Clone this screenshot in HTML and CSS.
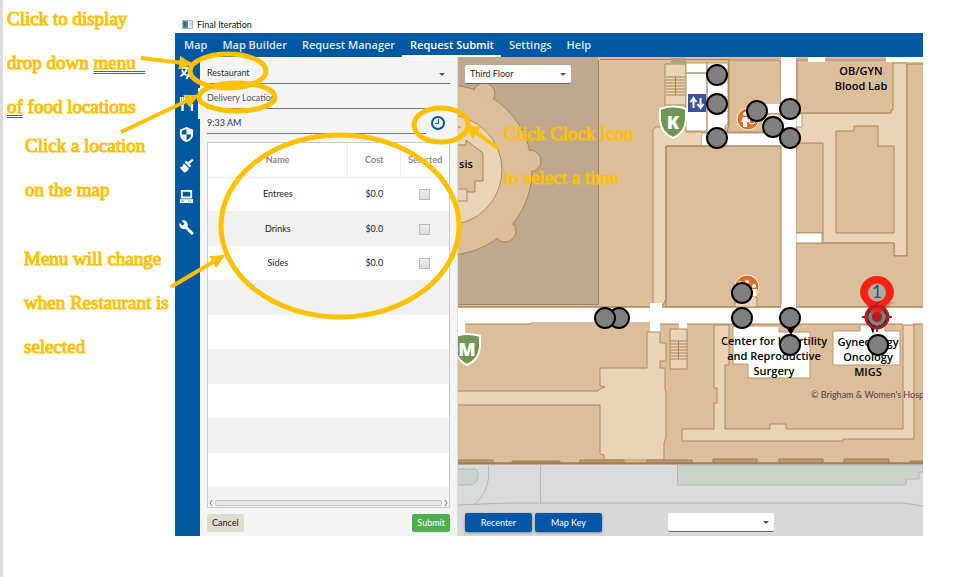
FILE: index.html
```html
<!DOCTYPE html>
<html lang="en">
<head>
<meta charset="utf-8">
<title>Final Iteration</title>
<link rel="stylesheet" href="styles.css">
</head>
<body>
<main class="sheet">
  <section class="app">
    <header class="titlebar">
      <svg class="app-icon" viewBox="0 0 11 9" aria-hidden="true"><rect x=".5" y=".5" width="10" height="8" fill="#e9edf0" stroke="#a9b4bb"/><rect x="1" y="1" width="5" height="7" fill="#4f8f86"/><rect x="2" y="2" width="2" height="5" fill="#2f6f8d"/><path d="M7 3h3M7 5h3" stroke="#c5ccd1"/></svg>
      <span>Final Iteration</span>
    </header>
    <nav class="tabs">
      <a href="#map">Map</a>
      <a href="#builder">Map Builder</a>
      <a href="#manager">Request Manager</a>
      <a href="#submit" class="active">Request Submit</a>
      <a href="#settings">Settings</a>
      <a href="#help">Help</a>
    </nav>
    <div class="body">
      <aside class="rail">
        <button aria-label="Translate"><svg viewBox="0 0 16 16"><path d="M1 3h9M5.500 1v2M8.500 3C8 7 5 10 1.500 12M3 5c1 3 3 5 5 6" class="line"/><path d="M8 15l3.500-9L15 15M9.500 12h4" class="line"/></svg></button>
        <button aria-label="Food" class="active"><svg viewBox="0 0 16 16"><path d="M1 1h1.500v5H3V1h1.500v5H5V1h1.500v6L5 9v7H2.500V9L1 7zM9 1l6 8v7h-2.500v-6L9 9z"/></svg></button>
        <button aria-label="Security"><svg viewBox="0 0 16 16"><path d="M8 0l7 3v5c0 4-3 7-7 8-4-1-7-4-7-8V3z"/><path d="M8 2v6H3V4zM8 8h5c0 3-2 5-5 6z" fill="#0058a2"/></svg></button>
        <button aria-label="Sanitation"><svg viewBox="0 0 16 16"><path d="M14 1l1.500 1.500-4 4 1.500 2-1.500 1.500L6 4.500 7.500 3l2 1.500zM5 5.500L10.500 11c-1 3-3 4.500-5 4.500l-5-5.500c2 0 4-1.500 4.500-4.500z"/></svg></button>
        <button aria-label="Computer"><svg viewBox="0 0 16 16"><path d="M2 1h12v9H2zM4 3v5h8V3zM1 11h14v4H1z" fill-rule="evenodd"/><path d="M3 13h2M10 13h1M12 13h1" stroke="#0058a2"/></svg></button>
        <button aria-label="Maintenance"><svg viewBox="0 0 16 16"><path d="M15.500 13.500L9 7c.8-2 .3-4-1-5.200C6.500.3 4.500 0 2.700.9L5.700 4 4 6 .8 3C0 4.800.4 7 1.800 8.300c1.300 1.300 3.200 1.700 5 1l6.500 6.300c.3.300.7.300 1 0l1.200-1.200c.3-.3.300-.7 0-.9z"/></svg></button>
      </aside>
      <form class="panel">
        <select class="field" aria-label="Service"><option>Restaurant</option></select>
        <input class="field" type="text" aria-label="Delivery Location" placeholder="Delivery Location">
        <div class="time-row">
          <input class="field" type="text" aria-label="Time" value="9:33 AM">
          <button type="button" class="clock" aria-label="Select a time"><svg viewBox="0 0 16 16"><circle cx="8" cy="8" r="6" fill="none" stroke="#0058a2" stroke-width="2"/><path d="M8.500 4v4.500H5" fill="none" stroke="#0058a2" stroke-width="1"/></svg></button>
        </div>
        <div class="menu">
          <div class="menu-view">
            <table>
              <colgroup><col class="c-name"><col class="c-cost"><col class="c-sel"></colgroup>
              <thead><tr><th>Name</th><th>Cost</th><th>Selected</th></tr></thead>
              <tbody>
                <tr><td>Entrees</td><td>$0.0</td><td><input type="checkbox" aria-label="Entrees"></td></tr>
                <tr><td>Drinks</td><td>$0.0</td><td><input type="checkbox" aria-label="Drinks"></td></tr>
                <tr><td>Sides</td><td>$0.0</td><td><input type="checkbox" aria-label="Sides"></td></tr>
                <tr><td colspan="3"></td></tr><tr><td colspan="3"></td></tr><tr><td colspan="3"></td></tr>
                <tr><td colspan="3"></td></tr><tr><td colspan="3"></td></tr><tr><td colspan="3"></td></tr>
                <tr><td colspan="3"></td></tr>
              </tbody>
            </table>
          </div>
          <div class="scroll" aria-hidden="true">
            <svg viewBox="0 0 4 6"><path d="M3 0L1 3l2 3"/></svg><span class="thumb"></span><svg viewBox="0 0 4 6"><path d="M1 0l2 3-2 3"/></svg>
          </div>
        </div>
        <div class="actions">
          <button type="button" class="cancel">Cancel</button>
          <button type="button" class="submit">Submit</button>
        </div>
      </form>
      <section class="map">
        <svg class="plan" viewBox="458 57 465 479" preserveAspectRatio="xMinYMin slice" role="img" aria-label="Third floor plan">
          <rect x="458" y="57" width="465" height="479" fill="#dbdbda"/>
          <path d="M458 504l50-1h400l15 2v31H458z" fill="#d8d8d7"/>
          <rect class="tan" x="450" y="50" width="490" height="413"/>
          <rect x="458" y="57" width="140" height="247" fill="#bca98e"/>
          <path class="edge" d="M598.500 304V60M458 304.500h141M458 307h323"/>
          <!-- rotunda -->
          <g class="tan">
            <circle cx="484" cy="94" r="11"/><circle cx="530" cy="161" r="11"/><circle cx="505" cy="231" r="11"/>
            <circle cx="447" cy="170" r="85"/>
          </g>
          <g fill="#dcbe9b"><circle cx="484" cy="94" r="10"/><circle cx="530" cy="161" r="10"/><circle cx="505" cy="231" r="10"/><circle cx="447" cy="170" r="84"/></g>
          <circle class="lite" cx="447" cy="170" r="55"/>
          <path class="tan" d="M450 145h16v-5l17 13v28h-8v11h-25z"/>
          <path class="lite" d="M450 189h17v12h-17z"/>
          <path class="edge" d="M458 127h3"/>
          <!-- upper light passages -->
          <path class="lite" d="M653 305V130l3-3h9V64h21v68h17v14h-37v153l-3 6z"/>
          <path class="edge" d="M600 59.500h129V132M666 105h20"/>
          <path class="stairs" d="M666 77h20M666 80h20M666 83h20M666 86h20M666 89h20M666 92h20M666 95h20M675.500 77v18"/>
          <rect x="671" y="58" width="15" height="5" fill="#b39e84"/>
          <path class="white" d="M686 63h21v10h-21zM686 73h21v58h-21zM707 63h21v61l-3 2v7h56v13h-79v-13h5z"/>
          <path class="tan" d="M734 132h47v-19h-16v-8h16V62l-3-2h-49v64l-2 8z"/>
          <rect x="765" y="104" width="17" height="9" fill="#fff"/>
          <path class="lite" d="M797 113h94v-50h16v193h-13v-13h-71v-10h-26z"/>
          <path class="tan" d="M797 60h96v50h-2v3h-94zM796 143h27v90h-27zM836 131h18v-5h24v20h16v87h-58z"/>
          <path class="tan" d="M907 64h25v243H796v-64h98v13h13z"/>
          <path class="white" d="M796 233h26v10h-26zM796 114h6v13h-6z"/>
          <path d="M781 57h15v250h-15zM702 134h80v11h-80zM808 57h17v5h-17zM886 57h37v5h-37z" fill="#fff"/>
          <path class="edge" d="M666 146v161h115V146z"/>
          <!-- main corridor -->
          <path d="M458 307.500h465v16.500H458z" fill="#fff"/>
          <path class="edge" d="M458 324h73v-1h119M660 324h19M687 324h97M458 307h192M660 307h121M796 307h127M796 324h127"/>
          <path d="M650 303h12v6h-12zM650 320h10v14h-10zM679 322h8v7h-8zM458 322h7v12h-7zM903 322h10v5h-10zM781 304h15v6h-15z" fill="#fff"/>
          <!-- lower light passages -->
          <path class="lite" d="M450 391h148l2-2 5-2-5-1v-18h47v-36h13v11h6v18h-6v7h5v22l1 2v45l-2 6v17h-60v-5l-4-1v-49H450z"/>
          <path class="lite" d="M670 329h17v40h-17z"/>
          <path class="stairs" d="M670 341h17M670 344h17M670 347h17M670 350h17M670 353h17M670 356h17M670 359h17M678.500 341v18"/>
          <path class="lite" d="M714 325h15v40h-4v64h45v-5h16v5h117V325h11v114h-71v2H682v-12h32v-26h3v-15h-3z"/>
          <path class="lite" d="M735 297h22v10h-22z"/>
          <path class="white" d="M733 326h46v6h31v46h-62v-14h-15zM833 331h27v-6h25v6h15v34h-67z"/>
          <!-- outer wall -->
          <path d="M458 460h35v3h-35zM512 461h48v2h-48zM580 460h44v3h-44zM647 460h45v3h-45zM713 459h44v4h-44zM779 459h44v4h-44zM844 459h45v4h-45zM910 461h13v2h-13z" fill="#b39c7d" stroke="#a07a4b"/>
          <path d="M458 463.500h465" stroke="#a67c4b" stroke-width="2"/>
          <!-- grounds -->
          <path d="M677.500 465H923v7h-4v7h-13v6H677.500zM450 469h24q4 0 4 4v3q-1 9-9 9h-19z" fill="#cad4c9" stroke="#b3b7b2"/>
          <path class="road" d="M488.500 465v12q-1 17-14 27M540.500 465v38M458 505l50-2h395l20 3"/>
          <!-- signs -->
          <path d="M660 109q13-5 26 0v11q-1 13-13 18-12-5-13-18z" fill="#719555" stroke="#fff" stroke-width="2"/>
          <text x="673" y="129" class="sign">K</text>
          <path d="M455 336q13-4 25 0v11q-1 13-13 18-11-5-12-18z" fill="#719555" stroke="#fff" stroke-width="2"/>
          <text x="467" y="356" class="sign">M</text>
          <rect x="688" y="94" width="18" height="18" fill="#3f4f9f"/>
          <path d="M693.500 108V99M690.500 102l3-4 3 4M700.500 98v9M697.500 104l3 4 3-4" fill="none" stroke="#fff" stroke-width="2"/>
          <g fill="#df7024" stroke="#fff"><circle cx="748" cy="119" r="11"/><circle cx="773" cy="126" r="11"/><circle cx="747" cy="287" r="12"/></g>
          <g fill="#fff"><circle cx="745" cy="114" r="2"/><path d="M743 117h4l2 5h-2v5h-4v-5h-2z"/><circle cx="740" cy="283" r="2"/><circle cx="747" cy="282" r="2"/><circle cx="754" cy="286" r="2"/><path d="M751 289h6l-1 7h-4z"/></g>
          <circle cx="752" cy="121" r="3" fill="none" stroke="#fff"/>
          <g class="label">
            <text x="861" y="75">OB/GYN</text><text x="861" y="90">Blood Lab</text>
            <text x="774" y="345">Center for Infertility</text><text x="774" y="360">and Reproductive</text><text x="774" y="375">Surgery</text>
            <text x="868" y="346">Gynecology</text><text x="868" y="361">Oncology</text><text x="868" y="376">MIGS</text>
            <text x="466" y="168">sis</text>
          </g>
          <text x="811" y="398" class="credit">© Brigham &amp; Women's Hospi</text>
          <path d="M785 326h11l-5 9zM870 326h5l-2 8z" fill="#000"/>
          <g class="node">
            <circle cx="717" cy="75" r="10"/><circle cx="717" cy="104" r="10"/><circle cx="717" cy="138" r="10"/>
            <circle cx="757" cy="111" r="10"/><circle cx="790" cy="109" r="10"/><circle cx="773" cy="127" r="10"/><circle cx="790" cy="138" r="10"/>
            <circle cx="742" cy="293" r="10"/><circle cx="742" cy="318" r="10"/><circle cx="790" cy="318" r="10"/><circle cx="790" cy="345" r="10"/>
            <circle cx="878" cy="345" r="10"/><circle cx="877" cy="317" r="10"/><circle cx="619" cy="318" r="10"/><circle cx="605" cy="318" r="10"/>
          </g>
          <path d="M864 302q6 8 10 17h6q4-10 14-17z" fill="#6b5038" opacity=".3"/>
          <circle cx="877" cy="292" r="10" fill="#b9a996"/>
          <path fill-rule="evenodd" d="M877 276c9.500 0 17 7.500 17 16.500 0 9-11 14-17 25-6-11-17-16-17-25 0-9 7.500-16.500 17-16.500zm0 7.500a9 9 0 1 0 0 18 9 9 0 0 0 0-18z" fill="#ff2015"/>
          <text x="877" y="298" class="pin">1</text>
          <circle cx="877" cy="317" r="11" fill="none" stroke="#b51c22" stroke-width="3"/>
          <circle cx="877" cy="317" r="5" fill="#b51c22"/>
          <path d="M877 302v6M877 326v6M862 317h6M886 317h6" stroke="#b51c22" stroke-width="2"/>
        </svg>
        <div class="map-top"><select class="floor" aria-label="Floor"><option>Third Floor</option></select></div>
        <div class="map-bottom">
          <button>Recenter</button><button>Map Key</button>
          <select class="floor" aria-label="Destination"><option></option></select>
        </div>
      </section>
    </div>
  </section>

  <p class="note n-menu">Click to display<br>drop down <u>menu&nbsp;&nbsp;</u><br><u>of</u> food locations</p>
  <p class="note n-place">Click a location<br>on the map</p>
  <p class="note n-change">Menu will change<br>when Restaurant is<br>selected</p>
  <p class="note n-clock">Click Clock Icon<br>to select a time</p>
  <svg class="marks" width="964" height="577" aria-hidden="true">
    <defs><marker id="head" markerUnits="userSpaceOnUse" markerWidth="14" markerHeight="14" refX="12" refY="7" orient="auto"><path d="M0 0l14 7-14 7z" fill="#ffc000"/></marker></defs>
    <g class="ring"><ellipse cx="228" cy="71" rx="38" ry="17"/><ellipse cx="237" cy="97" rx="38" ry="14"/><ellipse cx="441" cy="125" rx="27" ry="17"/><ellipse cx="340" cy="226" rx="119" ry="91"/></g>
    <g class="arrow"><path d="M141 58l50 6"/><path d="M121 132l76-36"/><path d="M499 149l-32-23"/><path d="M171 287l52-31"/></g>
  </svg>
</main>
</body>
</html>
```
FILE: styles.css
```css
* { box-sizing: border-box; }
body { margin: 0; background: #fff; font: 9px/12px Lato, "Noto Sans", sans-serif; color: #222; }
button, input, select { font: inherit; color: inherit; margin: 0; padding: 0; border: 0; border-radius: 0; background: none; }
.sheet { position: relative; min-height: 100vh; padding: 16px 41px 41px 172px; border-left: 3px solid #dcdcdc; overflow: hidden; }
.app { display: flex; flex-direction: column; min-height: 520px; }
.titlebar { display: flex; align-items: center; gap: 4px; height: 17px; padding: 0 7px; color: #111; }
.app-icon { width: 11px; height: 9px; }
.tabs { display: flex; height: 24px; padding-left: 1px; background: #0058a2; }
.tabs a { padding: 0 7px 0 8px; border-bottom: 2px solid transparent; color: #dce8f2; font: 600 11px/24px "Open Sans", sans-serif; text-decoration: none; white-space: nowrap; }
.tabs a.active { border-color: #fff; color: #fff; }
.body { display: flex; flex: 1; }

.rail { display: flex; flex-direction: column; width: 25px; background: #0058a2; }
.rail button { display: grid; place-items: center; height: 31px; border-right: 2px solid transparent; }
.rail button.active { border-color: #fff; }
.rail svg { width: 15px; height: 15px; fill: #fff; }
.rail .line { fill: none; stroke: #fff; stroke-width: 2; }

.panel { display: flex; flex-direction: column; width: 258px; padding: 2px 7px 4px; background: #f4f4f4; border-right: 1px solid #ddd; }
.field { width: 100%; height: 25px; border-bottom: 1px solid #777; color: #333; }
select.field { padding-top: 4px; background-position: right 5px top 14px; }
input.field { padding-top: 2px; }
.field::placeholder { color: #555; opacity: 1; }
select { appearance: none; background: url("data:image/svg+xml,%3Csvg xmlns='http://www.w3.org/2000/svg' width='6' height='3'%3E%3Cpath d='M0 0h6L3 3z' fill='%23555'/%3E%3C/svg%3E") no-repeat right 5px center; }
.time-row { display: flex; }
.clock { display: grid; place-items: center; flex: 0 0 24px; height: 28px; }
.clock svg { width: 16px; height: 16px; }
.menu { display: flex; flex-direction: column; margin-top: 5px; height: 366px; border: 1px solid #ccc; background: #fff; }
.menu-view { flex: 1; min-height: 0; overflow: hidden; }
table { width: 100%; border-collapse: collapse; table-layout: fixed; text-align: center; }
.c-name { width: 58%; }
.c-cost { width: 22%; }
.c-sel { width: 20%; }
th { height: 34px; padding: 0; border-bottom: 1px solid #eee; color: #888; font-weight: 700; }
th + th { border-left: 1px solid #eee; }
td { height: 34px; padding: 0; }
tr:nth-child(even) td { height: 35px; background: #f1f1f1; }
td input { appearance: none; display: inline-block; width: 11px; height: 11px; border: 1px solid #bbb; background: linear-gradient(#eee, #ddd); vertical-align: middle; }
.scroll { display: flex; align-items: center; gap: 2px; height: 9px; padding: 0 1px; background: #f2f2f2; }
.scroll svg { width: 4px; height: 6px; fill: none; stroke: #777; }
.thumb { flex: 1; height: 6px; border: 1px solid #c4c4c4; border-radius: 2px; background: #e6e6e6; }
.actions { display: flex; justify-content: space-between; margin-top: 6px; }
.actions button { height: 18px; padding: 0 5px; border-radius: 2px; }
.actions .cancel { background: #ddddce; }
.actions .submit { background: #4caf50; color: #fff; }

.map { position: relative; display: flex; flex: 1; flex-direction: column; justify-content: space-between; min-width: 0; padding: 8px 7px 4px; overflow: hidden; }
.plan { position: absolute; inset: 0; width: 100%; height: 100%; }
.map-top, .map-bottom { position: relative; display: flex; gap: 3px; }
.floor { width: 106px; height: 19px; padding-left: 5px; border-bottom: 1px solid #666; border-radius: 2px; background-color: #fff; }
.map-bottom button { width: 67px; height: 19px; border-radius: 2px; background-color: #0057a8; color: #fff; box-shadow: 0 1px 3px #888; }
.map-bottom .floor { margin-left: 63px; }
.tan { fill: #dcbe9b; stroke: #a98355; }
.lite { fill: #ead4b6; stroke: #ae8a5e; }
.white { fill: #fff; stroke: #b9986c; }
.edge, .stairs { fill: none; stroke: #a98355; }
.road { fill: none; stroke: #b5b5b5; }
.node { fill: #808080; stroke: #000; stroke-width: 2; }
.label { font: 600 11px "Open Sans", sans-serif; fill: #000; text-anchor: middle; }
.sign { font: 800 18px "Open Sans", sans-serif; fill: #fff; text-anchor: middle; }
.credit { font-size: 9px; fill: #444; }
.pin { font-size: 17px; fill: #0058a2; text-anchor: middle; }

.note { position: absolute; margin: 0; color: #ffc000; font: 19px/44px "Liberation Serif", serif; -webkit-text-stroke: 1px #ffc000; white-space: nowrap; }
.note u { text-decoration: underline double #2f62d9 1px; text-underline-offset: 2px; text-decoration-skip-ink: none; }
.n-menu { left: 4px; top: -3px; }
.n-place { left: 22px; top: 124px; }
.n-change { left: 21px; top: 237px; }
.n-clock { left: 501px; top: 112px; }
.marks { position: absolute; left: -3px; top: 0; pointer-events: none; }
.ring { fill: none; stroke: #ffc000; stroke-width: 5; }
.arrow path { fill: none; stroke: #ffc000; stroke-width: 4; marker-end: url(#head); }
```
